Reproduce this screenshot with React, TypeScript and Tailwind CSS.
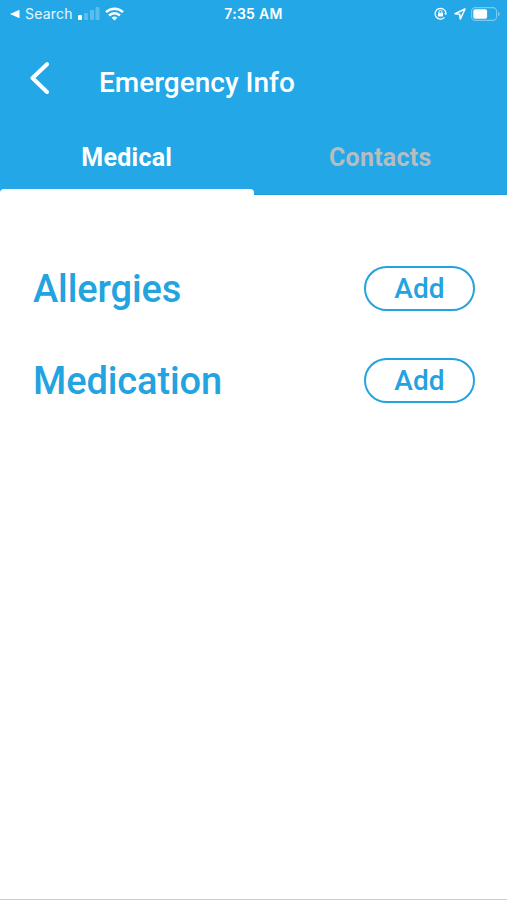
import React from "react";

function StatusBar() {
  return (
    <div className="grid h-[28px] grid-cols-3 items-center font-['Inter',sans-serif] text-white">
      <div className="flex items-center pl-[10px]">
        <svg width="10" height="10" viewBox="0 0 10 10" fill="currentColor">
          <path d="M0 5 9.5 .8v8.4z" />
        </svg>
        <span className="ml-[5px] text-[14px] leading-[28px] tracking-[0.2px] text-white/90">Search</span>
        <svg className="ml-[5px]" width="22" height="14" viewBox="0 0 22 14" fill="currentColor">
          <rect x="0" y="8" width="4" height="5" rx="1" />
          <rect x="6" y="6" width="4" height="7" rx="1" opacity=".25" />
          <rect x="12" y="3" width="4" height="10" rx="1" opacity=".25" />
          <rect x="17.5" y="0" width="4" height="13" rx="1" opacity=".25" />
        </svg>
        <svg className="ml-[5px]" width="19" height="14" viewBox="0 0 19 14" fill="none" stroke="currentColor" strokeWidth="2.5">
          <path d="M1 5.2a12.2 12.2 0 0 1 17 0M4.1 8.5a7.7 7.7 0 0 1 10.8 0" />
          <path d="m6.7 10.7 2.8 2.8 2.8-2.8a4.1 4.1 0 0 0-5.6 0z" fill="currentColor" stroke="none" />
        </svg>
      </div>
      <div className="text-center text-[14px] font-semibold leading-[28px] tracking-[0.3px]">7:35 AM</div>
      <div className="flex items-center justify-end pr-[7px]">
        <svg className="-mt-px" width="13" height="13" viewBox="0 0 13 13" fill="none" stroke="currentColor" strokeWidth="1.2">
          <path d="M10.5 10.4A5.4 5.4 0 1 1 11.9 6.5" />
          <path d="m10.1 6.2 1.8 2 1.1-2z" fill="currentColor" stroke="none" />
          <rect x="4" y="5.8" width="5" height="3.8" rx=".7" fill="currentColor" stroke="none" />
          <path d="M5 6V4.8a1.5 1.5 0 0 1 3 0V6" strokeWidth="1" />
        </svg>
        <svg className="-mt-px ml-[7px]" width="12" height="12" viewBox="0 0 12 12" fill="none" stroke="currentColor" strokeWidth="1.5" strokeLinejoin="round">
          <path d="M11 1 1 5.7l4.7.6.6 4.8z" />
        </svg>
        <svg className="-mt-px ml-[5px]" width="29" height="14" viewBox="0 0 29 14" fill="none">
          <rect x=".6" y=".6" width="25" height="12.8" rx="3.8" stroke="currentColor" strokeWidth="1.1" opacity=".4" />
          <rect x="2.3" y="2.3" width="13.8" height="9.4" rx="2" fill="currentColor" />
          <path d="M27 4.8c2.3.8 2.3 3.6 0 4.4z" fill="currentColor" opacity=".4" />
        </svg>
      </div>
    </div>
  );
}

function Row({ title }: { title: string }) {
  return (
    <div className="flex h-[45px] items-center justify-between pl-[33px] pr-[32px] text-[#23a3df]">
      <h2 className="pt-[2px] text-[38px] font-medium leading-[45px] tracking-[-0.1px]">{title}</h2>
      <button className="h-[45px] w-[111px] rounded-full border-2 border-[#23a3df] text-[28px] font-medium leading-[41px] tracking-[0.1px]">
        Add
      </button>
    </div>
  );
}

export default function App() {
  return (
    <div className="flex h-[900px] w-[507px] flex-col overflow-hidden border-b border-[#dfc4cc] bg-white font-['Roboto',sans-serif]">
      <header className="flex h-[195px] flex-col bg-[#23a7e7] text-white">
        <StatusBar />
        <div className="flex h-[107px] pl-[30px] pt-[34px]">
          <svg width="20" height="33" viewBox="0 0 20 33" fill="none" stroke="currentColor" strokeWidth="4" strokeLinecap="round" strokeLinejoin="round">
            <path d="M17 2.2 2.5 16 17 30" />
          </svg>
          <h1 className="ml-[49px] mt-[4px] text-[28px] font-medium leading-[33px]">Emergency Info</h1>
        </div>
        <nav className="grid h-[60px] grid-cols-2 text-center text-[25px] font-bold leading-[46px] tracking-[0.25px]">
          <div className="flex flex-col justify-between">
            <span>Medical</span>
            <span className="h-[6px] rounded-t-[4px] bg-white" />
          </div>
          <div className="border-b border-[#2499d3] text-[#b6bdc1]">Contacts</div>
        </nav>
      </header>
      <main className="flex flex-col gap-[47px] pt-[71px]">
        <Row title="Allergies" />
        <Row title="Medication" />
      </main>
    </div>
  );
}
